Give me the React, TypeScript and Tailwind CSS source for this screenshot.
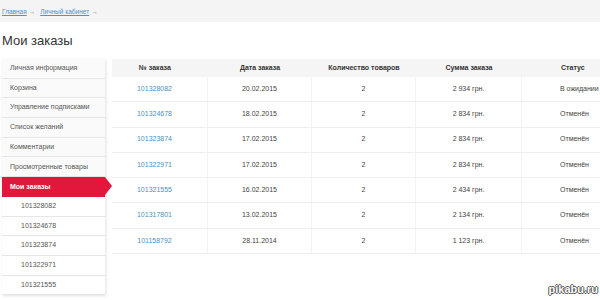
import React from 'react';

const menu = [
  'Личная информация',
  'Корзина',
  'Управление подписками',
  'Список желаний',
  'Комментарии',
  'Просмотренные товары',
];

const subOrders = ['101328082', '101324678', '101323874', '101322971', '101321555'];

const orders = [
  { id: '101328082', date: '20.02.2015', qty: 2, sum: '2 934 грн.', status: 'В ожидании' },
  { id: '101324678', date: '18.02.2015', qty: 2, sum: '2 834 грн.', status: 'Отменён' },
  { id: '101323874', date: '17.02.2015', qty: 2, sum: '2 834 грн.', status: 'Отменён' },
  { id: '101322971', date: '17.02.2015', qty: 2, sum: '2 834 грн.', status: 'Отменён' },
  { id: '101321555', date: '16.02.2015', qty: 2, sum: '2 434 грн.', status: 'Отменён' },
  { id: '101317801', date: '13.02.2015', qty: 2, sum: '2 134 грн.', status: 'Отменён' },
  { id: '101158792', date: '28.11.2014', qty: 2, sum: '1 123 грн.', status: 'Отменён' },
];

const App: React.FC = () => {
  return (
    <div className="relative w-[600px] h-[300px] overflow-hidden bg-white font-['Liberation_Sans',Arial,sans-serif]">
      {/* Breadcrumbs */}
      <div className="h-[22px] bg-[#f4f4f4] flex items-center pl-[2px] pt-[2px] text-[6.5px] text-[#888]">
        <a className="text-[#5b8fbf] underline">Главная</a>
        <span className="ml-[2px] mr-[5px]">→</span>
        <a className="text-[#5b8fbf] underline">Личный кабинет</a>
        <span className="ml-[2px]">→</span>
      </div>

      {/* Title */}
      <h1 className="pl-[2px] pt-[11px] h-[37px] text-[13px] leading-[15px] text-[#333]">Мои заказы</h1>

      <div className="flex">
        {/* Sidebar */}
        <div className="ml-[2px] w-[103px] shrink-0 bg-white shadow-[1px_1px_3px_rgba(0,0,0,0.12)] text-[7px]">
          {menu.map((item) => (
            <div
              key={item}
              className="h-[19.7px] flex items-center pl-[8px] bg-[#fafafa] border-b border-[#e6e6e6] text-[#555]"
            >
              {item}
            </div>
          ))}
          <div className="relative h-[19.7px] flex items-center pl-[8px] bg-[#e3173b] text-white font-bold">
            Мои заказы
            <div className="absolute right-[-7px] top-0 w-0 h-0 border-y-[9.85px] border-y-transparent border-l-[7px] border-l-[#e3173b]" />
          </div>
          {subOrders.map((id) => (
            <div
              key={id}
              className="h-[19.7px] flex items-center pl-[19px] border-b border-[#e6e6e6] text-[#555]"
            >
              {id}
            </div>
          ))}
        </div>

        {/* Orders table */}
        <div className="ml-[7px] flex-1 text-[7px] text-[#444]">
          <div className="grid grid-cols-[96px_104px_104px_106px_1fr] h-[18px] bg-[#f5f5f5] font-bold text-[#333] items-center">
            <div className="text-center pr-[10px]">№ заказа</div>
            <div className="text-center">Дата заказа</div>
            <div className="text-center">Количество товаров</div>
            <div className="text-center">Сумма заказа</div>
            <div className="pl-[39px]">Статус</div>
          </div>
          {orders.map((o) => (
            <div
              key={o.id}
              className="grid grid-cols-[96px_104px_104px_106px_1fr] h-[25.3px] border-b border-[#efefef]"
            >
              <div className="flex items-center justify-center pr-[10px] border-r border-[#f3f3f3] text-[#4d8fbd]">{o.id}</div>
              <div className="flex items-center justify-center border-r border-[#f3f3f3]">{o.date}</div>
              <div className="flex items-center justify-center border-r border-[#f3f3f3]">{o.qty}</div>
              <div className="flex items-center justify-center border-r border-[#f3f3f3]">{o.sum}</div>
              <div className="flex items-center pl-[38px]">{o.status}</div>
            </div>
          ))}
        </div>
      </div>

      {/* Watermark */}
      <div className="absolute right-[2px] bottom-[5px] text-[11px] font-bold leading-none text-white [text-shadow:-1px_0_#555,1px_0_#555,0_-1px_#555,0_1px_#555]">
        pikabu.ru
      </div>
    </div>
  );
};

export default App;
